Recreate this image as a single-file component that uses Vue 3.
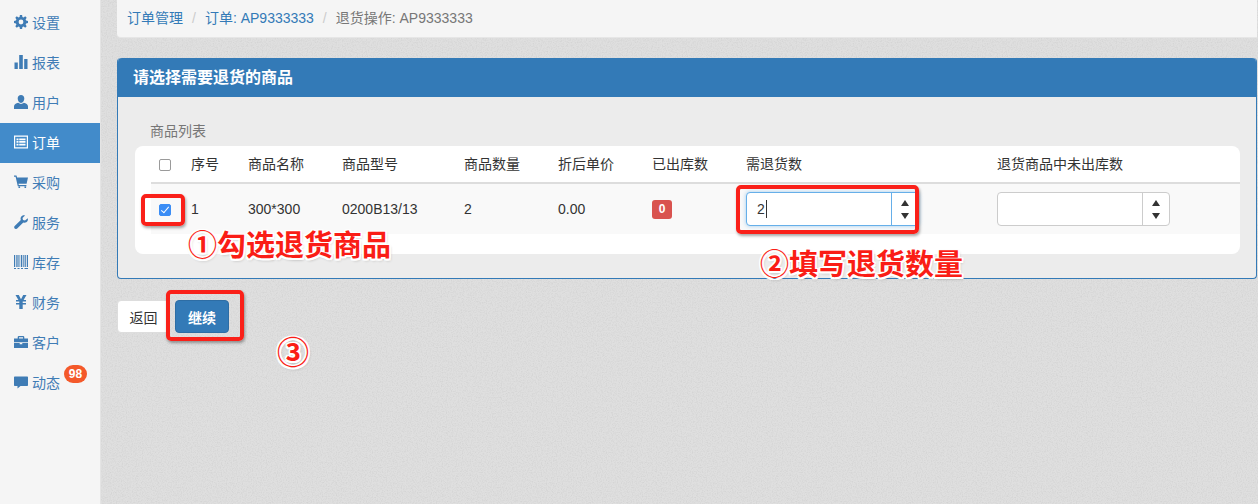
<script setup>
const menu = [
  { name: '设置', vb: '0 0 14 14', d: 'M5.9 0h2.2l.3 1.900 1.200.5L11.200 1.300l1.500 1.500-1.100 1.600.5 1.200L14 5.900v2.200l-1.900.3-.5 1.200 1.100 1.600-1.500 1.500-1.600-1.100-1.200.5-.3 1.900H5.900l-.3-1.900-1.200-.5-1.600 1.100-1.500-1.500 1.100-1.600-.5-1.200L0 8.100V5.900l1.900-.3.500-1.200L1.300 2.800l1.500-1.500 1.600 1.100 1.200-.5zM7 4.600a2.400 2.400 0 1 0 0 4.800 2.400 2.400 0 0 0 0-4.800z' },
  { name: '报表', vb: '0 0 14 14', d: 'M.5 7.500h3.300V14H.5zM5.200 0h3.600v14H5.200zM10.200 4h3.300v10h-3.300z' },
  { name: '用户', vb: '0 0 14 14', d: 'M7 0c2 0 3.300 1.500 3.300 3.500S9 8 7 8 3.700 5.500 3.700 3.500 5 0 7 0zM4.200 7.800C5 8.500 6 9 7 9s2-.5 2.800-1.200c2.200.4 4.200 1.500 4.200 3.700V14H0v-2.500c0-2.200 2-3.300 4.200-3.700z' },
  { name: '订单', vb: '0 0 14 14', d: 'M0 .5h14v13H0zM1.200 1.700v10.600h11.600V1.700zM2.500 3.500h2v1.700h-2zM5.200 3.500h6.300v1.700H5.200zM2.500 6.100h2v1.700h-2zM5.200 6.100h6.300v1.700H5.200zM2.500 8.700h2v1.700h-2zM5.200 8.700h6.300v1.700H5.200z', evenodd: true },
  { name: '采购', vb: '0 0 14 14', d: 'M0 .5h2.500l.6 2H14l-1.400 6.300H4.500l.3 1.200h7.600v1.200H3.800L1.600 1.700H0zM4.500 11.500h1.600V13H4.500zM10.500 11.500h1.600V13h-1.600z' },
  { name: '服务', vb: '0 0 14 14', d: 'M13.800 3.200c.4 1.700-.2 3.300-1.500 4-1 .6-2.100.6-3 .2L3.200 13.500c-.7.700-1.800.7-2.500 0-.7-.7-.7-1.800 0-2.500l6.100-6.100c-.4-1-.3-2.100.2-3 .8-1.300 2.300-1.900 4-1.500L8.500 3l.5 2 2 .5z' },
  { name: '库存', vb: '0 0 14 14', d: 'M0 0h1.200v12H0zM2 0h.7v12H2zM3.400 0h1.200v12H3.400zM5.500 0h.7v12h-.7zM7 0h1.300v12H7zM9.100 0h.7v12h-.7zM10.600 0h1.200v12h-1.200zM12.800 0H14v12h-1.200zM0 13h2v1H0zM3.500 13h2v1h-2zM7 13h2v1H7zM10.500 13H14v1h-3.500z' },
  { name: '财务', vb: '0 0 14 14', d: 'M1.500 0h3.300L7 4.200 9.200 0h3.300L9.600 5H12v1.600H8.700V8H12v1.600H8.700V14H5.300V9.600H2V8h3.300V6.600H2V5h2.400z' },
  { name: '客户', vb: '0 0 14 14', d: 'M4.500 1h5l.8.800V3.500H14v3.700H0V3.500h3.700V1.800zM5 2.300v1.200h4V2.300zM0 8h5.700v1.300h2.600V8H14v5H0z' },
  { name: '动态', vb: '0 0 14 14', d: 'M1 1.500h12c.6 0 1 .4 1 1v7.500c0 .6-.4 1-1 1H6.500l-3 2.500v-2.500H1c-.6 0-1-.4-1-1V2.500c0-.6.4-1 1-1z', badge: '98' }
]
const columns = ['序号', '商品名称', '商品型号', '商品数量', '折后单价', '已出库数', '需退货数', '退货商品中未出库数']
const widths = [32, 57, 94, 122, 94, 94, 94, 251, 251]
</script>

<template>
  <div class="page">
    <!-- 背景的细噪点 -->
    <svg class="grain" width="1258" height="504">
      <filter id="grain-noise">
        <feTurbulence type="fractalNoise" baseFrequency="0.8" numOctaves="2" seed="4" />
        <feColorMatrix values="0 0 0 0 0.5  0 0 0 0 0.5  0 0 0 0 0.5  0.7 0 0 0 -0.28" />
      </filter>
      <rect width="1258" height="504" filter="url(#grain-noise)" />
    </svg>

    <aside class="sidebar">
      <a v-for="item in menu" :key="item.name" class="nav-item" :class="{ active: item.name === '订单' }">
        <svg class="nav-icon" :viewBox="item.vb">
          <path :d="item.d" :fill-rule="item.evenodd ? 'evenodd' : 'nonzero'" />
        </svg>
        <span>{{ item.name }}</span>
        <em v-if="item.badge" class="badge">{{ item.badge }}</em>
      </a>
    </aside>

    <main class="main">
      <div class="breadcrumb">
        <a>订单管理</a><i>/</i><a>订单: AP9333333</a><i>/</i><span>退货操作: AP9333333</span>
      </div>

      <section class="panel">
        <h3 class="panel-title">请选择需要退货的商品</h3>
        <div class="panel-body">
          <div class="legend">商品列表</div>
          <div class="table-wrap">
            <table>
              <colgroup>
                <col v-for="(w, i) in widths" :key="i" :style="{ width: w + 'px' }" />
              </colgroup>
              <thead>
                <tr>
                  <th><input type="checkbox" class="check" /></th>
                  <th v-for="c in columns" :key="c">{{ c }}</th>
                </tr>
              </thead>
              <tbody>
                <tr>
                  <td><input type="checkbox" class="check" checked /></td>
                  <td>1</td>
                  <td>300*300</td>
                  <td>0200B13/13</td>
                  <td>2</td>
                  <td>0.00</td>
                  <td><span class="label-zero">0</span></td>
                  <td>
                    <div class="spinner focus">
                      <div class="spinner-value">2<span class="caret"></span></div>
                      <div class="spinner-arrows"><b class="up"></b><b class="down"></b></div>
                    </div>
                  </td>
                  <td>
                    <div class="spinner">
                      <div class="spinner-value"></div>
                      <div class="spinner-arrows"><b class="up"></b><b class="down"></b></div>
                    </div>
                  </td>
                </tr>
              </tbody>
            </table>
          </div>
        </div>
      </section>

      <div class="actions">
        <button class="btn">返回</button>
        <button class="btn primary">继续</button>
      </div>
    </main>

    <!-- 截图上的红色标注 -->
    <div class="mark mark-check"></div>
    <div class="mark mark-input"></div>
    <div class="mark mark-next"></div>
    <div class="note note-1">①勾选退货商品</div>
    <div class="note note-2">②填写退货数量</div>
    <div class="note note-3">③</div>
  </div>
</template>

<style>
body {
  background: #dcdcdc;
}
</style>

<style scoped>
.page {
  position: relative;
  isolation: isolate;
  display: flex;
  width: 1258px;
  height: 504px;
  overflow: hidden;
  background: #dfdfdf;
  font-family: "Liberation Sans", "Noto Sans CJK SC", sans-serif;
  font-size: 14px;
  color: #333;
}
.grain {
  position: absolute;
  left: 0;
  top: 0;
  z-index: -1;
}

.sidebar {
  flex: none;
  width: 100px;
  padding-top: 3px;
  background: #f5f5f5;
  border-right: 1px solid #e4e4e4;
}
.nav-item {
  position: relative;
  display: flex;
  align-items: center;
  gap: 4px;
  box-sizing: border-box;
  height: 40px;
  padding: 0 0 2px 14px;
  color: #3f7cb5;
}
.nav-item.active {
  background: #428bca;
  color: #fff;
}
.nav-icon {
  width: 14px;
  height: 14px;
  fill: currentColor;
}
.badge {
  position: absolute;
  left: 64px;
  top: 2px;
  width: 23px;
  height: 18px;
  border-radius: 9px;
  background: #f4592a;
  color: #fff;
  font-size: 12px;
  font-weight: bold;
  font-style: normal;
  line-height: 18px;
  text-align: center;
}

.main {
  flex: 1;
  min-width: 0;
  padding: 0 1px 0 16px;
}
.breadcrumb {
  height: 37px;
  padding-left: 10px;
  background: #f5f5f5;
  border-bottom: 1px solid #e6e6e6;
  border-radius: 0 0 0 4px;
  line-height: 36px;
  color: #777;
}
.breadcrumb a {
  color: #337ab7;
}
.breadcrumb i {
  padding: 0 9px;
  color: #ccc;
  font-style: normal;
}

.panel {
  margin-top: 20px;
  height: 220px;
  background: #ececec;
  border: 1px solid #337ab7;
  border-top: 0;
  border-radius: 4px;
}
.panel-title {
  margin: 0;
  height: 39px;
  padding-left: 15px;
  background: #337ab7;
  border-radius: 4px 4px 0 0;
  color: #fff;
  font-size: 16px;
  font-weight: bold;
  line-height: 40px;
}
.panel-body {
  padding: 25px 17px 0;
}
.legend {
  height: 24px;
  padding-left: 15px;
  color: #777;
  font-size: 14px;
  line-height: 18px;
}
.table-wrap {
  width: 1105px;
  height: 108px;
  padding: 0 0 0 16px;
  box-sizing: border-box;
  background: #fff;
  border-radius: 8px;
}
table {
  table-layout: fixed;
  width: 1089px;
  border-collapse: collapse;
  color: #333;
  font-size: 14px;
}
th {
  height: 34px;
  padding: 0 8px 2px;
  border-bottom: 2px solid #ddd;
  font-size: 14px;
  font-weight: normal;
  text-align: left;
}
td {
  height: 50px;
  padding: 0 8px;
  background: #f9f9f9;
}
th .check {
  margin-top: 4px;
}
td .check {
  margin-top: 2px;
}
.check {
  appearance: none;
  display: block;
  position: relative;
  width: 12px;
  height: 12px;
  margin: 0;
  background: #fff;
  border: 1px solid #9a9a9a;
  border-radius: 2px;
}
.check:checked {
  background: #3b8df5;
  border-color: #3b8df5;
}
.check:checked::after {
  content: "";
  position: absolute;
  left: 3px;
  top: 0;
  width: 3px;
  height: 7px;
  border: solid #fff;
  border-width: 0 1.5px 1.5px 0;
  transform: rotate(40deg);
}
.label-zero {
  display: inline-block;
  width: 20px;
  height: 19px;
  border-radius: 3px;
  background: #d9534f;
  color: #fff;
  font-size: 12px;
  font-weight: bold;
  line-height: 19px;
  text-align: center;
}
.spinner {
  display: flex;
  width: 173px;
  height: 34px;
  background: #fff;
  border: 1px solid #ccc;
  border-radius: 4px;
  box-sizing: border-box;
}
.spinner.focus {
  border-color: #66afe9;
  box-shadow: 0 0 4px rgba(102, 175, 233, 0.6);
}
.spinner-value {
  flex: 1;
  padding-left: 10px;
  line-height: 32px;
}
.caret {
  display: inline-block;
  width: 1px;
  height: 18px;
  margin-left: 1px;
  background: #333;
  vertical-align: -4px;
}
.spinner-arrows {
  flex: none;
  display: flex;
  flex-direction: column;
  align-items: center;
  justify-content: center;
  gap: 7px;
  width: 26px;
  border-left: 1px solid #ccc;
}
.spinner.focus .spinner-arrows {
  border-left-color: #66afe9;
}
.spinner-arrows b {
  width: 0;
  height: 0;
  border-left: 4px solid transparent;
  border-right: 4px solid transparent;
}
.spinner-arrows .up {
  border-bottom: 6px solid #333;
}
.spinner-arrows .down {
  border-top: 6px solid #333;
}

.actions {
  display: flex;
  align-items: flex-start;
  margin-top: 21px;
}
.btn {
  width: 53px;
  height: 33px;
  padding: 0;
  background: #fff;
  border: 1px solid #ddd;
  border-radius: 4px 0 0 4px;
  color: #333;
  font-family: inherit;
  font-size: 14px;
}
.btn.primary {
  margin-left: 5px;
  width: 54px;
  background: #337ab7;
  border-color: #2e6da4;
  border-radius: 4px;
  color: #fff;
  font-weight: bold;
}

.mark {
  position: absolute;
  box-sizing: border-box;
  border: 4px solid #fa2019;
  border-radius: 5px;
  box-shadow: 1px 2px 3px rgba(0, 0, 0, 0.35);
}
.mark-check {
  left: 141px;
  top: 194px;
  width: 44px;
  height: 32px;
}
.mark-input {
  left: 736px;
  top: 185px;
  width: 183px;
  height: 49px;
}
.mark-next {
  left: 166px;
  top: 290px;
  width: 78px;
  height: 51px;
}
.note {
  position: absolute;
  color: #fa1d16;
  font-size: 29px;
  font-weight: bold;
  line-height: 34px;
  white-space: nowrap;
  text-shadow:
    -1.500px 0 0 #fff, 1.500px 0 0 #fff, 0 -1.500px 0 #fff, 0 1.500px 0 #fff,
    -1.500px -1.500px 0 #fff, 1.500px 1.500px 0 #fff, -1.500px 1.500px 0 #fff, 1.500px -1.500px 0 #fff,
    1px 2px 3px rgba(0, 0, 0, 0.3);
}
.note-1 {
  left: 188px;
  top: 229px;
}
.note-2 {
  left: 760px;
  top: 248px;
}
.note-3 {
  left: 277px;
  top: 336px;
  font-size: 32px;
}
</style>
